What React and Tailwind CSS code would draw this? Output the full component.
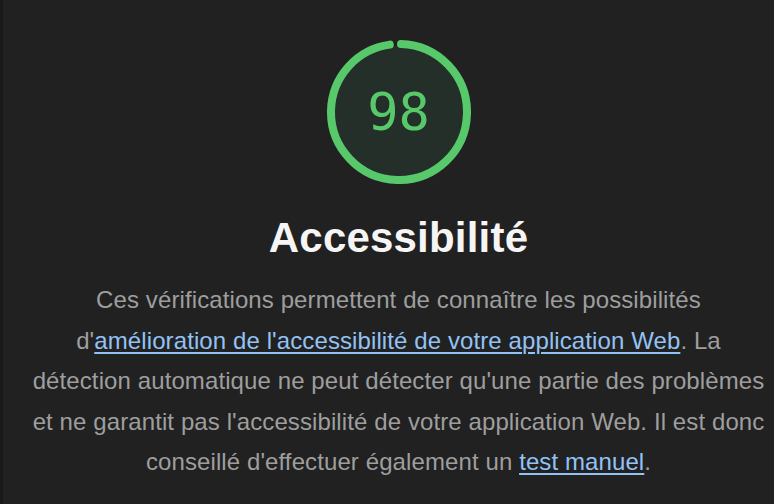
import React from "react"

function Gauge({ score }) {
  const r = 68
  const c = 2 * Math.PI * r
  const len = c - 12
  return (
    <div className="relative w-[144px] h-[144px]">
      <svg width="144" height="144" viewBox="0 0 144 144">
        <circle cx="72" cy="72" r="66" fill="#252f29" />
        <circle
          cx="72"
          cy="72"
          r={r}
          fill="none"
          stroke="#57c96b"
          strokeWidth="8"
          strokeLinecap="round"
          strokeDasharray={`${len} ${c}`}
          transform="rotate(-88.3 72 72)"
        />
      </svg>
      <div className="absolute inset-0 flex items-center justify-center text-[52px] text-[#57c96b] font-['DejaVu_Sans_Mono',monospace] leading-none">
        {score}
      </div>
    </div>
  )
}

export default function App() {
  const link = "text-[#93c2f5] underline underline-offset-[3px] decoration-[1.5px]"
  return (
    <div className="w-[774px] h-[504px] bg-[#212121] flex overflow-hidden font-['Liberation_Sans',Arial,sans-serif]">
      <div className="w-[3px] h-full bg-[#1a1a1a]" />
      <div className="flex-1 flex flex-col items-center pt-[40px] pl-[20px]">
        <Gauge score={98} />
        <h1 className="mt-[33px] text-[42px] font-bold text-[#f5f5f5] leading-none tracking-[0.2px]">Accessibilité</h1>
        <p className="mt-[21px] text-center text-[24px] leading-[40.5px] text-[#9e9e9e] whitespace-nowrap tracking-[0.1px]">
          Ces vérifications permettent de connaître les possibilités<br />
          d'<a className={link}>amélioration de l'accessibilité de votre application Web</a>. La<br />
          détection automatique ne peut détecter qu'une partie des problèmes<br />
          et ne garantit pas l'accessibilité de votre application Web. Il est donc<br />
          conseillé d'effectuer également un <a className={link}>test manuel</a>.
        </p>
      </div>
    </div>
  )
}
